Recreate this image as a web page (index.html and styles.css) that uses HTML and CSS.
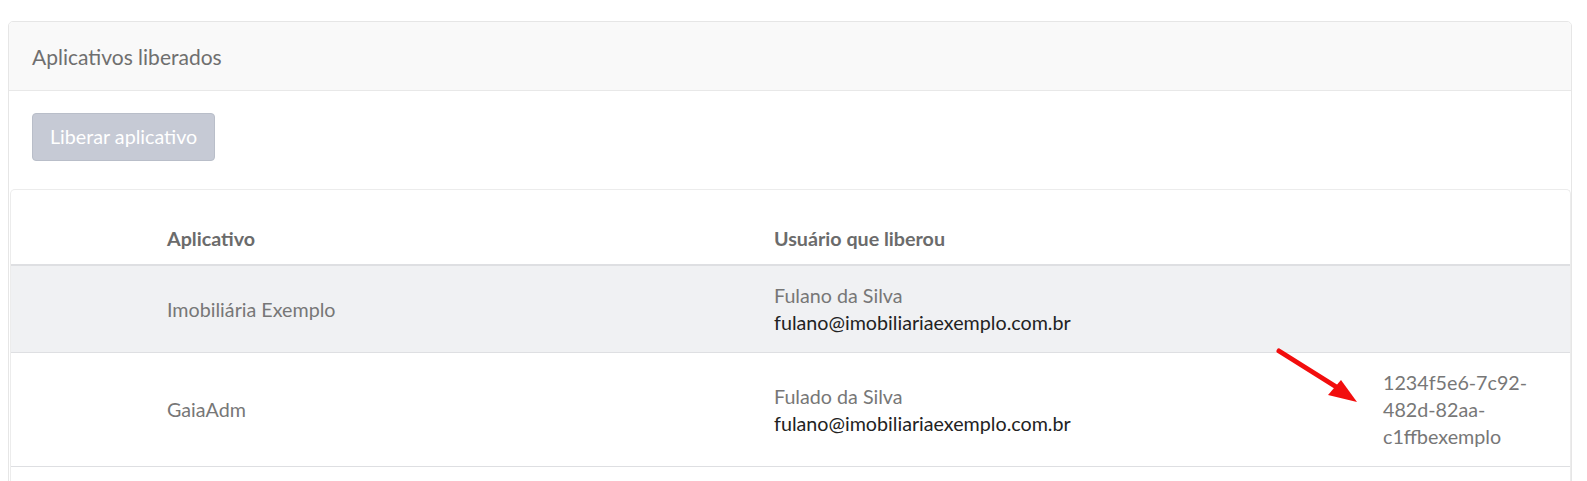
FILE: index.html
```html
<!DOCTYPE html>
<html lang="pt-BR">
<head>
<meta charset="utf-8">
<title>Aplicativos liberados</title>
<link rel="stylesheet" href="styles.css">
</head>
<body>
<div class="card">
  <div class="card-header">Aplicativos liberados</div>
  <div class="card-body">
    <button class="btn" type="button" disabled>Liberar aplicativo</button>
  </div>
  <div class="table-card">
    <table class="table">
      <colgroup>
        <col class="c0"><col class="c1"><col class="c2"><col class="c3">
      </colgroup>
      <thead>
        <tr><th></th><th>Aplicativo</th><th>Usuário que liberou</th><th></th></tr>
      </thead>
      <tbody>
        <tr class="striped">
          <td></td>
          <td>Imobiliária Exemplo</td>
          <td class="top"><span class="name">Fulano da Silva</span><br><span class="email">fulano@imobiliariaexemplo.com.br</span></td>
          <td></td>
        </tr>
        <tr>
          <td></td>
          <td>GaiaAdm</td>
          <td><span class="name">Fulado da Silva</span><br><span class="email">fulano@imobiliariaexemplo.com.br</span></td>
          <td class="uuid">1234f5e6-7c92-482d-82aa-c1ffbexemplo</td>
        </tr>
        <tr class="filler">
          <td></td><td></td><td></td><td></td>
        </tr>
      </tbody>
    </table>
  </div>
</div>
<svg class="arrow" width="1587" height="481" viewBox="0 0 1587 481" aria-hidden="true">
  <line x1="1279" y1="351" x2="1338" y2="388" stroke="#f20d0d" stroke-width="5" stroke-linecap="round"/>
  <polygon points="1357,402 1328,395 1341,380" fill="#f20d0d"/>
</svg>
</body>
</html>
```
FILE: styles.css
```css
html, body {
  margin: 0;
  padding: 0;
  background: #ffffff;
}
body {
  padding: 21px 15px 0 8px;
  font-family: Lato, "Open Sans", "Liberation Sans", sans-serif;
  font-size: 19.7px;
  line-height: 27px;
  color: #777777;
}
.card {
  border: 1px solid #e6e6e6;
  border-radius: 5px;
  background: #ffffff;
  overflow: hidden;
}
.card-header {
  background: #f9f9f9;
  border-bottom: 1px solid #e8e8e8;
  padding: 21px 23px 20px;
  color: #6f6f6f;
  font-size: 21px;
  line-height: 27px;
}
.card-body {
  padding: 22px 23px 28px;
}
.btn {
  font-family: inherit;
  font-size: 19.7px;
  line-height: 26px;
  padding: 10px 17px;
  color: #ffffff;
  background: #c6cad5;
  border: 1px solid #b9bec9;
  border-radius: 4px;
  display: block;
}
.table-card {
  margin: 0 0 0 1px;
  border: 1px solid #ececec;
  border-bottom: none;
  border-radius: 5px 5px 0 0;
}
.table {
  width: 100%;
  border-collapse: collapse;
  table-layout: fixed;
}
.c0 { width: 144px; }
.c1 { width: 607px; }
.c2 { width: 609px; }
.c3 { width: auto; }
.table th {
  text-align: left;
  vertical-align: bottom;
  font-weight: 700;
  color: #6b6b6b;
  padding: 35px 12px 12px;
  border-bottom: 2px solid #dedfe2;
}
.table td {
  padding: 16px 12px;
  vertical-align: middle;
  border-top: 1px solid #dedfe2;
  color: #777777;
}
.table tbody tr:first-child td {
  border-top: none;
}
.table td.top {
  vertical-align: top;
}
.striped td {
  background: #f0f1f3;
}
.email {
  color: #222222;
}
.uuid {
  vertical-align: top;
}
.filler td {
  height: 60px;
}
.arrow {
  position: absolute;
  left: 0;
  top: 0;
  pointer-events: none;
}
```
